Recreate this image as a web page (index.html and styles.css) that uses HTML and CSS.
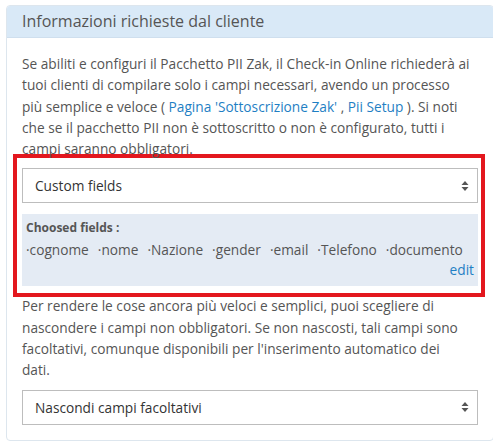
FILE: index.html
```html
<!DOCTYPE html>
<html>
<head>
    <title>Informazioni richieste dal cliente</title>
    <link rel="stylesheet" href="styles.css">
</head>
<body>
    <div class="panel">
        <div class="panel-heading">Informazioni richieste dal cliente</div>
        <div class="panel-body">
            <p class="intro">
                Se abiliti e configuri il Pacchetto PII Zak, il Check-in Online richiederà ai<br>
                tuoi clienti di compilare solo i campi necessari, avendo un processo<br>
                più semplice e veloce ( <a href="#">Pagina 'Sottoscrizione Zak'</a> , <a href="#">Pii Setup</a> ). Si noti<br>
                che se il pacchetto PII non è sottoscritto o non è configurato, tutti i<br>
                campi saranno obbligatori.
            </p>

            <div class="highlight">
                <div class="select-box">
                    <span>Custom fields</span>
                    <svg class="caret" width="8" height="12" viewBox="0 0 8 12"><path d="M4 1 L7.5 5 L0.5 5 Z M4 11 L7.5 7 L0.5 7 Z" fill="#555"/></svg>
                </div>
                <div class="chosen">
                    <div class="chosen-title">Choosed fields :</div>
                    <div class="chosen-list">
                        <span>·cognome</span>
                        <span>·nome</span>
                        <span>·Nazione</span>
                        <span>·gender</span>
                        <span>·email</span>
                        <span>·Telefono</span>
                        <span>·documento</span>
                    </div>
                    <div class="chosen-edit"><a href="#">edit</a></div>
                </div>
            </div>

            <p class="outro">
                Per rendere le cose ancora più veloci e semplici, puoi scegliere di<br>
                nascondere i campi non obbligatori. Se non nascosti, tali campi sono<br>
                facoltativi, comunque disponibili per l'inserimento automatico dei<br>
                dati.
            </p>

            <div class="select-box">
                <span>Nascondi campi facoltativi</span>
                <svg class="caret" width="8" height="12" viewBox="0 0 8 12"><path d="M4 1 L7.5 5 L0.5 5 Z M4 11 L7.5 7 L0.5 7 Z" fill="#555"/></svg>
            </div>
        </div>
    </div>
</body>
</html>
```

FILE: styles.css
```css
body { margin: 0; padding: 5px 0 0 6px; background: #fff; font-family: "Open Sans", sans-serif; color: #555; font-size: 13.7px; overflow: hidden; }
a { color: #1f7fc4; text-decoration: none; }

.panel { width: 488px; box-sizing: border-box; border: 1px solid #dde6ee; border-radius: 4px; }
.panel-heading { background: #d9e9f7; border-bottom: 1px solid #cfdfee; height: 31px; line-height: 30px; padding: 0 15px; font-size: 16px; color: #555; border-radius: 3px 3px 0 0; }
.panel-body { padding: 15px 15px 15px 15px; }

.intro { margin: 0; line-height: 21.3px; white-space: nowrap; }
.outro { margin: 0; line-height: 21.3px; white-space: nowrap; }

.highlight { margin: -5px -7px -2px -9px; border: 4px solid #e3171e; padding: 10px 3px 7px 5px; }

.select-box { display: flex; align-items: center; justify-content: space-between; height: 35px; box-sizing: border-box; border: 1px solid #bdbdbd; padding: 0 8px 0 12px; color: #333; font-size: 13.7px; background: #fff; }
.outro + .select-box { margin-top: 9px; }
.caret { display: block; }

.chosen { background: #e4ebf4; margin-top: 11px; padding: 5px 4px 3px 4px; height: 72px; box-sizing: border-box; }
.chosen-title { font-size: 12px; font-weight: bold; line-height: 18px; }
.chosen-list { display: flex; gap: 9px; line-height: 21px; margin-top: 2px; }
.chosen-edit { text-align: right; line-height: 20px; }
```
